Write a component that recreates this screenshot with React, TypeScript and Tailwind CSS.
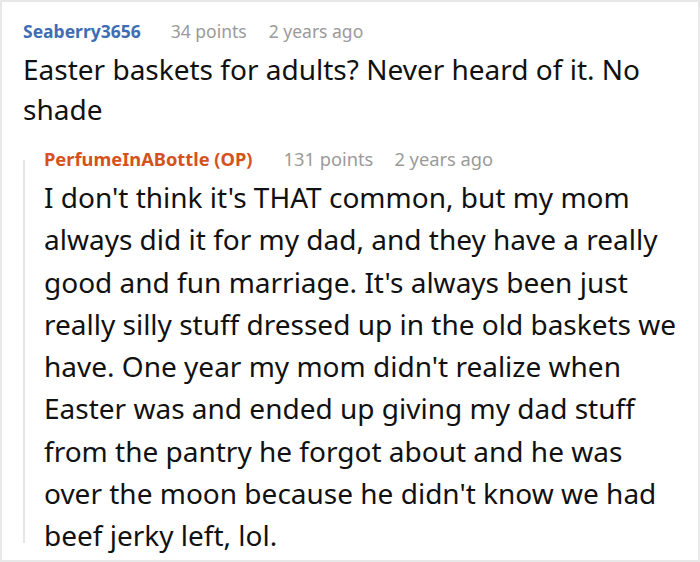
export default function App() {
  return (
    <div
      className="w-[700px] h-[562px] bg-white border-2 border-[#e8e8e8] overflow-hidden"
      style={{ fontFamily: '"Noto Sans", "Open Sans", sans-serif' }}
    >
      <div className="pl-[21px] pr-4 pt-[16px]">
        <div className="flex items-baseline text-[17.5px] leading-[26px]">
          <span className="font-bold text-[#3e6db5]">Seaberry3656</span>
          <span className="ml-[30px] text-[#9a9a9a]">34 points</span>
          <span className="ml-[22px] text-[#9a9a9a]">2 years ago</span>
        </div>
        <p className="mt-[5px] text-[28px] leading-[40px] text-[#111]">
          Easter baskets for adults? Never heard of it. No shade
        </p>

        {/* reply thread */}
        <div className="mt-[31px] flex flex-col border-l-2 border-[#e6e6e6] pl-[19px]">
          <div className="-mt-[14px] flex items-baseline text-[18.3px] leading-[26px]">
            <span className="font-bold text-[#d4521c]">PerfumeInABottle (OP)</span>
            <span className="ml-[31px] text-[#9a9a9a]">131 points</span>
            <span className="ml-[21px] text-[#9a9a9a]">2 years ago</span>
          </div>
          <p className="mt-[4px] -mb-[14px] text-[28px] leading-[42.3px] text-[#111]">
            I don't think it's THAT common, but my mom always did it for my dad, and they have a
            really good and fun marriage. It's always been just really silly stuff dressed up in
            the old baskets we have. One year my mom didn't realize when Easter was and ended up
            giving my dad stuff from the pantry he forgot about and he was over the moon because
            he didn't know we had beef jerky left, lol.
          </p>
        </div>
      </div>
    </div>
  )
}
